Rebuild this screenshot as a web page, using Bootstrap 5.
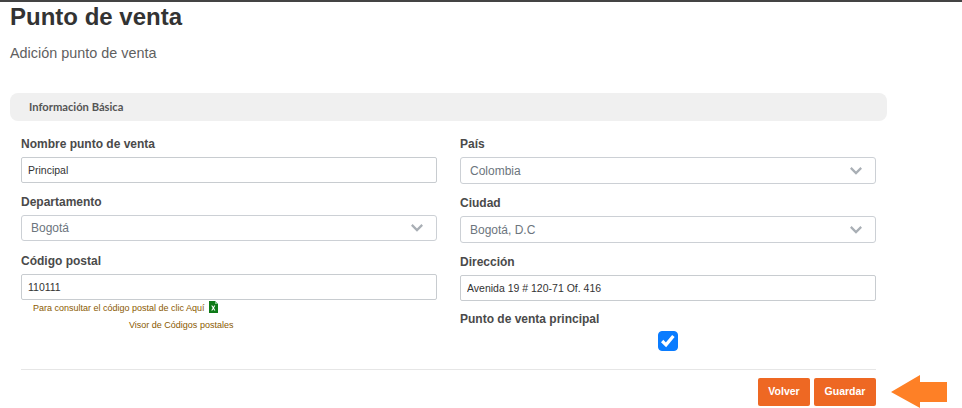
<!DOCTYPE html>
<html lang="es">
<head>
<meta charset="utf-8">
<title>Punto de venta</title>
<link rel="stylesheet" href="https://cdn.jsdelivr.net/npm/bootstrap@5.3.0/dist/css/bootstrap.min.css">
<style>
html,body{height:408px;overflow:hidden}
body{font-family:"Liberation Sans",Arial,sans-serif;background:#fff;color:#444;border-top:2px solid #444}
.page-wrap{width:887px;padding-left:10px}
.page-title{font-size:24px;font-weight:700;line-height:30px;color:#333;margin:0}
.page-sub{font-size:14.4px;line-height:20px;color:#5f5f5f;margin:11px 0 30px}
.section-bar{background:#f0f0f0;border-radius:8px;height:28px;line-height:28px;padding-left:19px;font-family:Lato,sans-serif;font-size:11.2px;font-weight:700;color:#555}
.form-area{padding:0 11px;margin-top:15px}
.form-cols{--bs-gutter-x:23px;--bs-gutter-y:0}
.fld-label{display:block;font-size:12px;font-weight:700;line-height:16px;color:#4a4a4a;margin:0 0 5px}
.fld{height:26px;border:1px solid #c8ccd0;border-radius:2px;font-size:10.5px;color:#333;padding:0 6px;box-shadow:none}
.fld-sel{height:26px;border:1px solid #ccd0d5;border-radius:3px;font-size:12px;color:#6c757d;padding:0 30px 0 9px;background-image:url("data:image/svg+xml,%3csvg xmlns='http://www.w3.org/2000/svg' viewBox='0 0 12 8'%3e%3cpath fill='none' stroke='%23a9afb5' stroke-width='2.2' d='M.8.9 6 6.1 11.2.9'/%3e%3c/svg%3e");background-position:right 13px center;background-size:12px 8px}
.col-left .fld-block{margin-bottom:11px}
.col-left .fld-block:nth-child(2){margin-bottom:12px}
.col-right .fld-block{margin-bottom:11px}
.col-right .fld-block:nth-child(3){margin-bottom:10px}
.col-right .fld-sel{height:27px}
.hint{font-size:9px;color:#8a5a00;line-height:11px}
.hint-one{padding-left:12px;margin-top:1px;height:14px;display:flex;align-items:flex-start}
.hint-one span{margin-top:2px}
.hint-two{margin-left:108px;margin-top:5px}
.xls{width:10px;height:12px;margin-left:3px;flex:none}
.check-wrap{height:20px;margin-top:-1px}
.big-check{width:20px;height:20px;margin:0;border-radius:4px}
.big-check:checked{background-color:#0a7cff;border-color:#0a7cff;background-image:url("data:image/svg+xml,%3csvg xmlns='http://www.w3.org/2000/svg' viewBox='0 0 20 20'%3e%3cpath fill='none' stroke='%23fff' stroke-width='3.6' d='M3.5 10 7.8 14.3 16 4.5'/%3e%3c/svg%3e");background-size:100% 100%}
.sep{margin:18px 0 8px;border:0;border-top:1px solid #e6e6e6;opacity:1}
.act-btn{background:#ee6823;border:0;color:#fff;font-size:10.5px;font-weight:700;height:28px;padding:0;border-radius:2px}
.act-btn:hover{background:#ee6823;color:#fff}
.btn-vol{width:52px}
.btn-gua{width:62px}
.act-row{gap:4px}
.pointer{position:absolute;left:891px;top:375px;width:57px;height:33px}
</style>
</head>
<body>
<div class="page-wrap">
  <h1 class="page-title">Punto de venta</h1>
  <p class="page-sub">Adición punto de venta</p>
  <div class="section-bar">Información Básica</div>
  <div class="form-area">
    <div class="row form-cols">
      <div class="col-6 col-left">
        <div class="fld-block">
          <label class="fld-label">Nombre punto de venta</label>
          <input class="form-control fld" type="text" value="Principal">
        </div>
        <div class="fld-block">
          <label class="fld-label">Departamento</label>
          <select class="form-select fld-sel"><option>Bogotá</option></select>
        </div>
        <div>
          <label class="fld-label">Código postal</label>
          <input class="form-control fld" type="text" value="110111">
          <div class="hint hint-one"><span>Para consultar el código postal de clic Aquí</span>
            <svg class="xls" viewBox="0 0 10 12"><path d="M1 0h6l3 3v9H1z" fill="#0e7a18"/><path d="M7 0l3 3H7z" fill="#7fc489"/><path d="M3.2 4.5h1.2l.9 1.5.9-1.5h1.1L6 7l1.4 2.6H6.2l-.9-1.6-.9 1.6H3.2L4.7 7z" fill="#fff"/></svg>
          </div>
          <div class="hint hint-two">Visor de Códigos postales</div>
        </div>
      </div>
      <div class="col-6 col-right">
        <div class="fld-block">
          <label class="fld-label">País</label>
          <select class="form-select fld-sel"><option>Colombia</option></select>
        </div>
        <div class="fld-block">
          <label class="fld-label">Ciudad</label>
          <select class="form-select fld-sel"><option>Bogotá, D.C</option></select>
        </div>
        <div class="fld-block">
          <label class="fld-label">Dirección</label>
          <input class="form-control fld" type="text" value="Avenida 19 # 120-71 Of. 416">
        </div>
        <div>
          <label class="fld-label">Punto de venta principal</label>
          <div class="d-flex justify-content-center check-wrap">
            <input class="form-check-input big-check" type="checkbox" checked>
          </div>
        </div>
      </div>
    </div>
    <hr class="sep">
    <div class="d-flex justify-content-end act-row">
      <button class="btn act-btn btn-vol" type="button">Volver</button>
      <button class="btn act-btn btn-gua" type="button">Guardar</button>
    </div>
  </div>
</div>
<svg class="pointer" viewBox="0 0 57 33"><polygon points="0,17 29,0 29,7 56,7 56,27 29,27 29,33" fill="#fe8026"/></svg>
<script src="https://cdn.jsdelivr.net/npm/bootstrap@5.3.0/dist/js/bootstrap.bundle.min.js"></script>
</body>
</html>
